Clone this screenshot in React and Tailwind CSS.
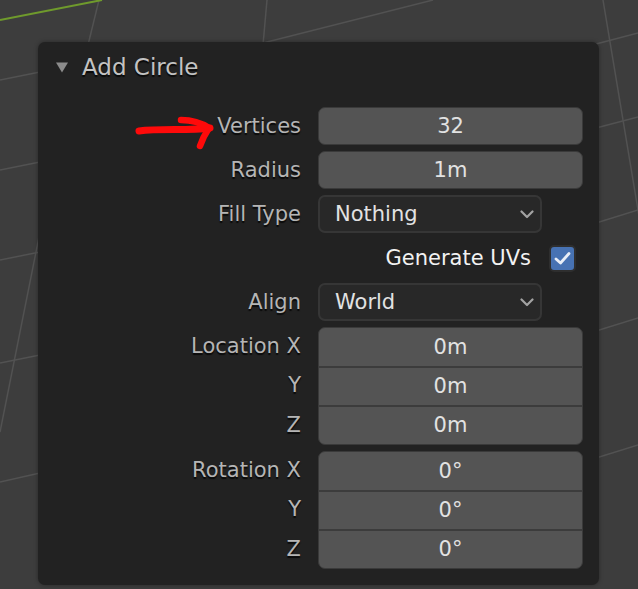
import React from 'react';

const font = { fontFamily: '"DejaVu Sans", "Liberation Sans", sans-serif' };

const labelCls = 'text-[21px] text-[#b5b5b5] [text-shadow:0_2px_1px_rgba(0,0,0,0.75)] leading-none';
const valueCls = 'text-[21px] text-[#e2e2e2] leading-none';

const Chevron = () => (
    <svg width="14" height="9" viewBox="0 0 14 9" className="mr-[6px]">
        <polyline points="1.5,1.5 7,7 12.5,1.5" fill="none" stroke="#a3a3a3" strokeWidth="2.2" strokeLinecap="round" strokeLinejoin="round" />
    </svg>
);

const Row = ({ label, children }) => (
    <div className="flex items-center h-[38px]">
        <div className={`w-[263px] text-right ${labelCls}`}>{label}</div>
        <div className="ml-[17px] flex-1 flex items-center h-full pr-[16px]">{children}</div>
    </div>
);

const NumField = ({ value }) => (
    <div className={`w-full h-full rounded-[7px] bg-[#545454] border border-[#3a3a3a] flex items-center justify-center ${valueCls}`}>
        {value}
    </div>
);

const Dropdown = ({ value }) => (
    <div className={`w-[224px] h-full rounded-[7px] bg-[#282828] border-2 border-[#363636] flex items-center justify-between pl-[15px] ${valueCls}`}>
        <span>{value}</span>
        <Chevron />
    </div>
);

const Group = ({ labels, values }) => (
    <div className="flex h-[118px]">
        <div className="w-[263px] flex flex-col">
            {labels.map((l, i) => (
                <div key={i} className={`flex items-center justify-end ${i === 2 ? 'h-[40px]' : 'h-[39px]'} ${labelCls}`}>{l}</div>
            ))}
        </div>
        <div className="ml-[17px] flex-1 pr-[16px]">
            <div className="h-full rounded-[7px] bg-[#545454] border border-[#3a3a3a] overflow-hidden flex flex-col">
                {values.map((v, i) => (
                    <div key={i} className={`flex items-center justify-center ${i === 0 ? 'h-[38px]' : 'h-[39px] border-t-2 border-[#3c3c3c]'} ${valueCls}`}>{v}</div>
                ))}
            </div>
        </div>
    </div>
);

const Backdrop = () => (
    <svg className="absolute inset-0" width="638" height="589" viewBox="0 0 638 589">
        <g stroke="#525252" strokeWidth="1.5" fill="none">
            <line x1="99" y1="0" x2="88" y2="45" />
            <line x1="267" y1="0" x2="263" y2="45" />
            <line x1="263" y1="43" x2="433" y2="0" />
            <line x1="0" y1="80" x2="40" y2="72" />
            <line x1="0" y1="170" x2="40" y2="162" />
            <line x1="0" y1="260" x2="40" y2="252" />
            <line x1="0" y1="363" x2="40" y2="355" />
            <line x1="0" y1="482" x2="40" y2="473" />
            <line x1="40" y1="232" x2="0" y2="432" />
            <line x1="603" y1="0" x2="640" y2="222" />
            <line x1="596" y1="44" x2="638" y2="33" />
            <line x1="596" y1="128" x2="638" y2="117" />
            <line x1="596" y1="223" x2="638" y2="210" />
            <line x1="596" y1="331" x2="638" y2="318" />
            <line x1="596" y1="458" x2="638" y2="445" />
        </g>
        <line x1="0" y1="20" x2="102" y2="0" stroke="#6f9a2c" strokeWidth="2" />
    </svg>
);

const Arrow = () => (
    <svg className="absolute left-0 top-0" width="240" height="160" viewBox="0 0 240 160">
        <g stroke="#ff0a0a" fill="none" strokeLinecap="round" strokeLinejoin="round">
            <path d="M139 131 C 160 128, 188 131, 210 128" strokeWidth="7" />
            <path d="M181 120 C 193 120, 203 124, 209 128 C 205 134, 202 140, 200 146" strokeWidth="6.5" />
        </g>
    </svg>
);

export default function App() {
    return (
        <div className="relative w-[638px] h-[589px] bg-[#3d3d3d] overflow-hidden" style={font}>
            <Backdrop />
            <div className="relative ml-[38px] mt-[42px] w-[561px] h-[543px] rounded-[7px] bg-[#222222] shadow-[0_0_4px_rgba(0,0,0,0.35)] flex flex-col">
                <div className="h-[50px] flex items-center pl-[18px]">
                    <svg width="12" height="11" viewBox="0 0 12 11">
                        <polygon points="0,0.5 12,0.5 6,10.5" fill="#8c8c8c" />
                    </svg>
                    <span className="ml-[14px] text-[23px] text-[#c3c3c3] [text-shadow:0_2px_1px_rgba(0,0,0,0.75)] leading-none">Add Circle</span>
                </div>
                <div className="mt-[15px] flex flex-col gap-[6px]">
                    <Row label="Vertices"><NumField value="32" /></Row>
                    <Row label="Radius"><NumField value="1m" /></Row>
                    <Row label="Fill Type"><Dropdown value="Nothing" /></Row>
                    <Row label="">
                        <div className="flex-1 flex items-center justify-end pr-[7px]">
                            <span className="text-[21px] text-[#f2f2f2] leading-none">Generate UVs</span>
                            <div className="ml-[18px] w-[27px] h-[27px] rounded-[5px] bg-[#4772b3] border-2 border-[#2e2e2e] flex items-center justify-center">
                                <svg width="19" height="17" viewBox="0 0 19 17">
                                    <polyline points="3,9 7.5,13 16,3.5" fill="none" stroke="#e9eef7" strokeWidth="2.8" strokeLinecap="round" strokeLinejoin="round" />
                                </svg>
                            </div>
                        </div>
                    </Row>
                    <Row label="Align"><Dropdown value="World" /></Row>
                    <Group labels={['Location X', 'Y', 'Z']} values={['0m', '0m', '0m']} />
                    <Group labels={['Rotation X', 'Y', 'Z']} values={['0°', '0°', '0°']} />
                </div>
            </div>
            <Arrow />
        </div>
    );
}
